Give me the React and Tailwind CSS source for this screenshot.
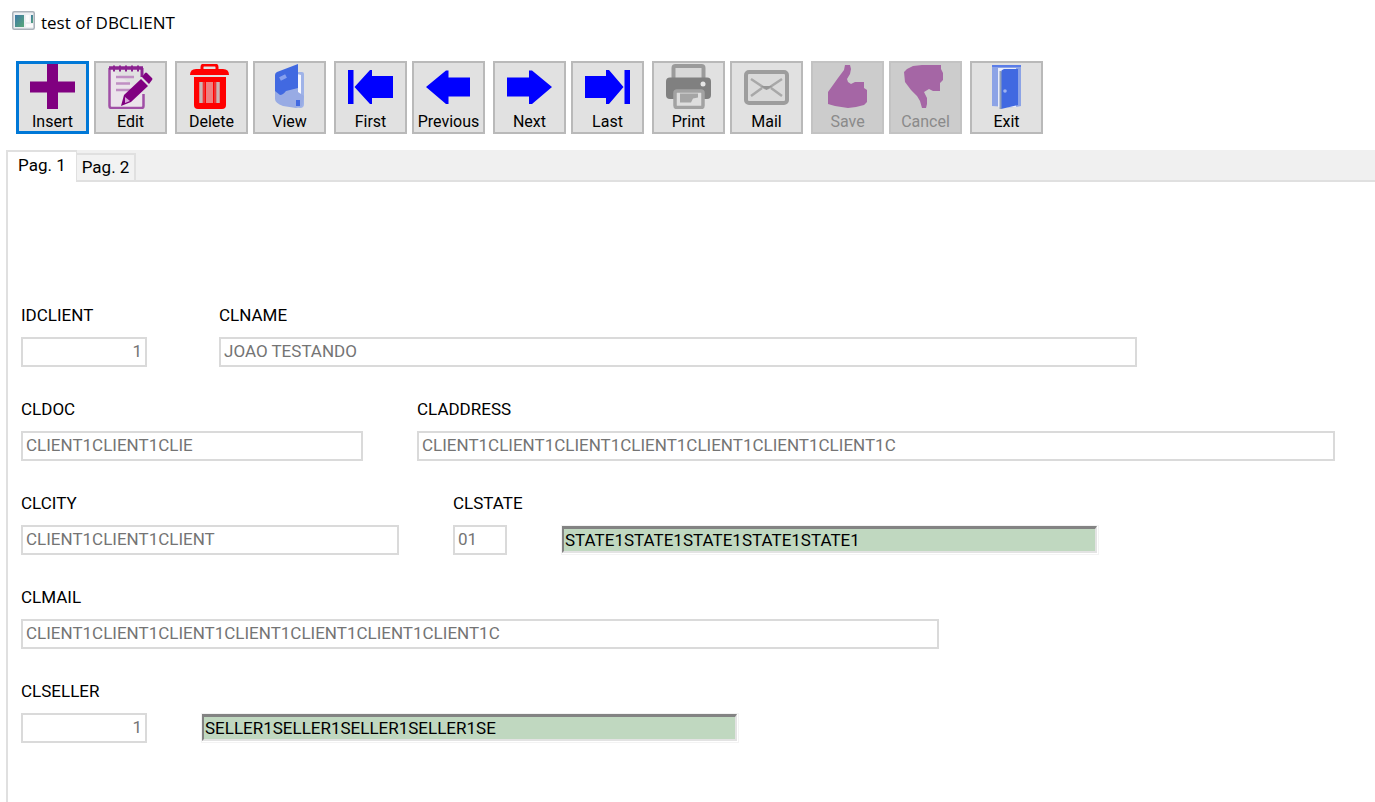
import React, { useState } from "react";
import clsx from "clsx";

const PURPLE = "#800080";
const BLUE = "#0000ff";
const ROYAL = "#4169e1";

const ICONS = {
  insert: (
    <path d="M17 0h11v17.5h17v11H28V45H17V28.5H0v-11h17z" fill={PURPLE} />
  ),
  edit: (
    <>
      <path d="M1.500 4v38q0 2 2 2h30q2 0 2-2V30" fill="#ebe3eb" stroke="#a04fa6" strokeWidth="2.500" />
      <path d="M34 4v9" stroke="#8b2290" strokeWidth="3" />
      <path d="M1 4h34" stroke="#8b2290" strokeWidth="3.500" />
      <path d="M6 1.500v6M12 1.500v6M18 1.500v6M24 1.500v6M30 1.500v6" stroke="#8b2290" strokeWidth="2" />
      <path d="M8 13h18M8 19.500h14M8 26h16" stroke="#c08fc3" strokeWidth="2.500" />
      <path d="M13 42l3-11L33 15l7 7-17 16z" fill={PURPLE} />
      <path d="M34 13l3-4q1-1 2 0l5 5q1 1 0 2l-3 4z" fill={PURPLE} />
      <path d="M17 33l5 4-5 2z" fill="#d9a6db" />
    </>
  ),
  delete: (
    <>
      <path d="M13 5V3q0-2 2-2h11q2 0 2 2v2" fill="none" stroke="red" strokeWidth="3" />
      <path d="M1 11q0-6 6-6h27q6 0 6 6z" fill="red" />
      <path d="M5 13h32v28q0 4-4 4H9q-4 0-4-4z" fill="red" />
      <path d="M12 18v21M29 18v21" stroke="#c9b5b5" strokeWidth="3.500" />
      <path d="M20.500 18v21" stroke="#ee8080" strokeWidth="7" />
      <path d="M15 18v21M26 18v21" stroke="#e94444" strokeWidth="1.500" />
    </>
  ),
  view: (
    <>
      <path d="M30 8h5q2 0 2 2v30q0 4-4 4l-6-1z" fill="#9fb3e8" />
      <path d="M30 10l4 1v18q0 2-3 2l-3 1z" fill="#f4f6ff" />
      <path d="M8 11q0-2 2-3L31 0v29q0 2-3 2L8 35z" fill={ROYAL} />
      <path d="M8 27l5 4q3 0 6-4l12-3v4l6 4-2 10-6 2-13-2q-8-3-8-7z" fill="#98abe4" />
      <path d="M29 36h4v6h-4z" fill={ROYAL} />
      <path d="M13 15l6-3" stroke="#87a0ee" strokeWidth="4" />
    </>
  ),
  first: (
    <path d="M0 6h5.500v34H0zM6.500 23L22 6h2v6h21v22H24v6h-2z" fill={BLUE} />
  ),
  previous: <path d="M0 23L20 6.500h2.500v7H44v19H22.500v7.500H20z" fill={BLUE} />,
  next: <path d="M45 23L25 6.500h-3v7H0v19h22v7.500h3z" fill={BLUE} />,
  last: (
    <path d="M39.500 6H45v34h-5.500zM38.500 23L24 6h-3v6H0v22h21v6h3z" fill={BLUE} />
  ),
  print: (
    <>
      <path d="M7.500 15V4q0-2 2-2h26q2 0 2 2v11" fill="#d8d8d8" stroke="#9b9b9b" strokeWidth="4" />
      <path d="M4 13.500h37q4 0 4 4V31q0 4-4 4H4q-4 0-4-4V17.500q0-4 4-4z" fill="#808080" />
      <rect x="9" y="27" width="28" height="16.500" rx="2" fill="#dedede" stroke="#a2a2a2" strokeWidth="3.500" />
      <path d="M14 29.500h18v4l-5 1-2 4H14z" fill="#a5a5a5" />
      <circle cx="37" cy="20" r="2.500" fill="#e6e6e6" />
    </>
  ),
  mail: (
    <>
      <rect x="2" y="8" width="41" height="31" rx="3" fill="#dadada" stroke="#9d9d9d" strokeWidth="4" />
      <path d="M7 15l12 8q3.500 2.500 7 0l12-8M7 32l11-8M38 32l-11-8" fill="none" stroke="#a8a8a8" strokeWidth="2.500" />
      <path d="M17 22h11l-5.500 4z" fill="#959595" />
    </>
  ),
  save: (
    <path
      d="M20 1h5l1 4-1 5-3 5 1 3 3 2 4-2h9v6l3 2v12l-3 3-8 2-8 1-13-2-7-2V28l5-7 5-7 6-8z"
      fill="#a566a5"
    />
  ),
  cancel: (
    <path
      d="M1 8l3-3 6-3 9-1h19v4l2 4v7l-3 3v8h-7l-4-2-5 3 3 6v6l-1 4h-4l-2-7-3-5-6-6-6-8z"
      fill="#a566a5"
    />
  ),
  exit: (
    <>
      <path d="M8 1h29v41q-9 2-14 1l-15-1z" fill="#8ca3e6" />
      <path d="M8 1h29v2H8z" fill="#5b7de8" />
      <path d="M14 4h18v39H14z" fill="#e8ecfa" />
      <path d="M17 8q0-2 3-3h14v36l-17 4z" fill={ROYAL} />
      <path d="M16.500 7v38" stroke="#90a0b8" strokeWidth="2" />
      <circle cx="21" cy="27" r="1.800" fill="#9fb3f0" />
    </>
  ),
};

const TOOLBAR = [
  [
    { id: "insert", label: "Insert", active: true },
    { id: "edit", label: "Edit" },
  ],
  [
    { id: "delete", label: "Delete" },
    { id: "view", label: "View" },
  ],
  [
    { id: "first", label: "First" },
    { id: "previous", label: "Previous" },
  ],
  [
    { id: "next", label: "Next" },
    { id: "last", label: "Last" },
  ],
  [
    { id: "print", label: "Print" },
    { id: "mail", label: "Mail" },
  ],
  [
    { id: "save", label: "Save", disabled: true },
    { id: "cancel", label: "Cancel", disabled: true },
  ],
  [{ id: "exit", label: "Exit" }],
];

function ToolButton({ id, label, active, disabled }) {
  return (
    <button
      type="button"
      disabled={disabled}
      className={clsx(
        "flex h-[73px] w-[73px] shrink-0 flex-col items-center text-[16px] leading-[22px]",
        active && "border-3 border-[#0078d7] bg-[#e1e1e1] text-black",
        !active && !disabled && "border-2 border-[#b9b9b9] bg-[#e1e1e1] pt-px text-black",
        disabled && "border-2 border-[#c3c3c3] bg-[#cccccc] pt-px text-[#8a8a8a]"
      )}
    >
      <svg viewBox="0 0 45 45" className="mb-[2px] h-[45px] w-[45px] shrink-0" aria-hidden="true">
        {ICONS[id]}
      </svg>
      {label}
    </button>
  );
}

function TitleBar() {
  return (
    <header className="flex h-[45px] items-center gap-[6px] pl-3">
      <svg viewBox="0 0 23 19" className="mb-1 h-[19px] w-[23px]" aria-hidden="true">
        <defs>
          <linearGradient id="screen" x1="0" y1="0" x2="1" y2="1">
            <stop offset="0" stopColor="#3f78a8" />
            <stop offset="1" stopColor="#57a877" />
          </linearGradient>
        </defs>
        <rect x="0.750" y="0.750" width="21.500" height="17.500" rx="1.500" fill="#eceff2" stroke="#a9b1b9" strokeWidth="1.500" />
        <rect x="3" y="4" width="9" height="12" fill="url(#screen)" />
        <rect x="14" y="4" width="3.500" height="7" fill="#fbfbfb" />
        <rect x="14" y="13" width="7" height="3" fill="#fbfbfb" />
        <rect x="19" y="4" width="2" height="8" fill="url(#screen)" />
      </svg>
      <h1 className="font-['Open_Sans',sans-serif] text-[17px] leading-[24px]">test of DBCLIENT</h1>
    </header>
  );
}

function Field({ id, label, value, width, align }) {
  return (
    <div className={clsx("flex min-w-0 flex-col gap-3", width)}>
      <label htmlFor={id} className="leading-5">
        {label}
      </label>
      <input
        id={id}
        defaultValue={value}
        disabled
        className={clsx(
          "h-[30px] w-full border-2 border-[#dadada] bg-white px-[3px] pb-[2px] text-[#747474]",
          align
        )}
      />
    </div>
  );
}

function Lookup({ label, value }) {
  return (
    <div className="w-[538px] min-w-0 border border-[#f3f3f3] pr-px pb-px">
      <input
        aria-label={label}
        defaultValue={value}
        readOnly
        className="block h-[27px] w-full border-2 border-t-[3px] border-t-[#838383] border-r-[#e3e3e3] border-b-[#e3e3e3] border-l-[#838383] bg-[#c0d8c0] px-px pb-px outline-none"
      />
    </div>
  );
}

function ClientForm() {
  return (
    <form className="flex flex-col gap-8 pt-[123px] pr-10 pb-14 pl-[13px]">
      <div className="flex items-end gap-[72px]">
        <Field id="idclient" label="IDCLIENT" value="1" width="w-[126px]" align="text-right" />
        <Field id="clname" label="CLNAME" value="JOAO TESTANDO" width="w-[918px]" />
      </div>
      <div className="flex items-end gap-[54px]">
        <Field id="cldoc" label="CLDOC" value="CLIENT1CLIENT1CLIE" width="w-[342px]" />
        <Field
          id="claddress"
          label="CLADDRESS"
          value="CLIENT1CLIENT1CLIENT1CLIENT1CLIENT1CLIENT1CLIENT1C"
          width="w-[918px]"
        />
      </div>
      <div className="flex items-end gap-[54px]">
        <Field id="clcity" label="CLCITY" value="CLIENT1CLIENT1CLIENT" width="w-[378px]" />
        <Field id="clstate" label="CLSTATE" value="01" width="w-[54px]" />
        <Lookup label="State name" value="STATE1STATE1STATE1STATE1STATE1" />
      </div>
      <div className="flex items-end">
        <Field
          id="clmail"
          label="CLMAIL"
          value="CLIENT1CLIENT1CLIENT1CLIENT1CLIENT1CLIENT1CLIENT1C"
          width="w-[918px]"
        />
      </div>
      <div className="flex items-end gap-[54px]">
        <Field id="clseller" label="CLSELLER" value="1" width="w-[126px]" align="text-right" />
        <Lookup label="Seller name" value="SELLER1SELLER1SELLER1SELLER1SE" />
      </div>
    </form>
  );
}

export default function App() {
  const [page, setPage] = useState(1);

  return (
    <div className="flex min-h-screen flex-col bg-white font-[Roboto,sans-serif] text-[17px] text-black">
      <TitleBar />

      <nav className="flex gap-2 px-4 pt-4 pb-4">
        {TOOLBAR.map((group) => (
          <div key={group[0].id} className="flex gap-[5px]">
            {group.map((b) => (
              <ToolButton key={b.id} {...b} />
            ))}
          </div>
        ))}
      </nav>

      <main className="ml-[6px] flex grow flex-col">
        <div role="tablist" className="flex h-8 items-end bg-[#f0f0f0]">
          {[1, 2].map((n) => (
            <button
              key={n}
              type="button"
              role="tab"
              aria-selected={page === n}
              onClick={() => setPage(n)}
              className={clsx(
                "border-[#e0e0e0] leading-5",
                page === n
                  ? "h-8 border-t-2 border-r border-l-2 bg-white px-[10px] pb-1"
                  : "h-[29px] border-y-2 border-r-2 bg-[#f2f2f2] px-[5px] pb-px"
              )}
            >
              Pag. {n}
            </button>
          ))}
          <div className="grow self-stretch border-b-2 border-[#e0e0e0]" />
        </div>
        <section role="tabpanel" className="grow border-l-2 border-[#e0e0e0]">
          {page === 1 && <ClientForm />}
        </section>
      </main>
    </div>
  );
}
